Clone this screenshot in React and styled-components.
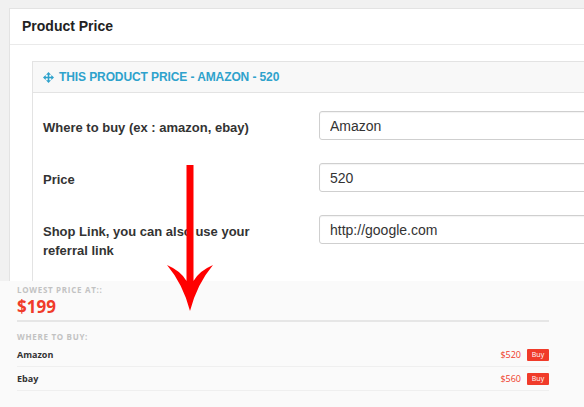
import React from "react";
import styled, { createGlobalStyle } from "styled-components";

const GlobalStyle = createGlobalStyle`
  html, body {
    margin: 0;
    padding: 0;
    background: #f1f1f1;
  }
  * {
    box-sizing: border-box;
  }
`;

const Page = styled.div`
  position: relative;
  width: 584px;
  height: 407px;
  overflow: hidden;
  background: #f1f1f1;
`;

const AdminArea = styled.div`
  height: 281px;
  overflow: hidden;
  padding: 8px 0 0 9px;
`;

const Panel = styled.div`
  margin-right: -60px;
  background: #fff;
  border: 1px solid #e3e3e3;
  font-family: "Liberation Sans", Arial, sans-serif;
  min-height: 320px;
`;

const PanelHeader = styled.div`
  height: 36px;
  display: flex;
  align-items: center;
  padding: 0 12px 2px;
  border-bottom: 1px solid #eaeaea;
  font-size: 14px;
  font-weight: bold;
  color: #222;
`;

const PanelBody = styled.div`
  padding: 16px 0 0 22px;
`;

const Box = styled.div`
  border: 1px solid #e3e3e3;
  min-height: 260px;
`;

const BoxHeader = styled.div`
  height: 31px;
  display: flex;
  align-items: center;
  gap: 5px;
  padding: 0 10px;
  background: #f8f8f8;
  border-bottom: 1px solid #e3e3e3;
  color: #2ea2cc;
  font-size: 12px;
  font-weight: bold;
  letter-spacing: -0.1px;
`;

const BoxBody = styled.div`
  padding: 18px 0 0 10px;
  display: flex;
  flex-direction: column;
  gap: 23px;
`;

const Row = styled.div`
  display: flex;
  align-items: flex-start;
`;

const Label = styled.label`
  width: 276px;
  flex-shrink: 0;
  padding-top: 7px;
  padding-right: 40px;
  font-size: 13px;
  line-height: 19px;
  font-weight: bold;
  color: #333;
`;

const Input = styled.input`
  width: 320px;
  height: 29px;
  padding: 0 10px;
  border: 1px solid #cfcfcf;
  border-radius: 3px;
  box-shadow: inset 0 1px 1px rgba(0, 0, 0, 0.05);
  font-family: "Liberation Sans", Arial, sans-serif;
  font-size: 14px;
  color: #333;
  background: #fff;
`;

const Widget = styled.div`
  height: 126px;
  background: #fafafa;
  padding: 3px 35px 0 17px;
  font-family: "Open Sans", sans-serif;
`;

const Caption = styled.div`
  font-size: 8px;
  line-height: 12px;
  font-weight: bold;
  letter-spacing: 0.7px;
  text-transform: uppercase;
  color: #c2c2c2;
`;

const BigPrice = styled.div`
  font-size: 17px;
  line-height: 22px;
  font-weight: bold;
  color: #f03b2a;
  padding-bottom: 2px;
  margin-bottom: 9px;
  border-bottom: 2px solid #e6e6e6;
`;

const ShopList = styled.div``;

const ShopRow = styled.div`
  height: 24px;
  display: flex;
  align-items: center;
  border-bottom: 1px solid #efefef;
`;

const ShopName = styled.span`
  flex: 1;
  font-size: 9px;
  font-weight: bold;
  color: #333;
`;

const ShopPrice = styled.span`
  font-size: 9px;
  color: #f03b2a;
  margin-right: 6px;
`;

const BuyButton = styled.span`
  width: 22px;
  height: 12px;
  display: flex;
  align-items: center;
  justify-content: center;
  background: #f03b2a;
  border-radius: 1px;
  color: #fff;
  font-size: 7px;
`;

const ArrowOverlay = styled.svg`
  position: absolute;
  inset: 0;
  pointer-events: none;
`;

const MoveIcon = () => (
  <svg width="11" height="11" viewBox="0 0 20 20" fill="#2ea2cc">
    <rect x="8.6" y="3" width="2.8" height="14" />
    <rect x="3" y="8.6" width="14" height="2.8" />
    <polygon points="10,0 14.5,5 5.5,5" />
    <polygon points="10,20 14.5,15 5.5,15" />
    <polygon points="0,10 5,5.5 5,14.5" />
    <polygon points="20,10 15,5.5 15,14.5" />
  </svg>
);

const fields = [
  { label: "Where to buy (ex : amazon, ebay)", value: "Amazon" },
  { label: "Price", value: "520" },
  { label: "Shop Link, you can also use your referral link", value: "http://google.com" },
];

const shops = [
  { name: "Amazon", price: "$520" },
  { name: "Ebay", price: "$560" },
];

export default function App() {
  return (
    <Page>
      <GlobalStyle />
      <AdminArea>
        <Panel>
          <PanelHeader>Product Price</PanelHeader>
          <PanelBody>
            <Box>
              <BoxHeader>
                <MoveIcon />
                THIS PRODUCT PRICE - AMAZON - 520
              </BoxHeader>
              <BoxBody>
                {fields.map((f) => (
                  <Row key={f.label}>
                    <Label>{f.label}</Label>
                    <Input defaultValue={f.value} />
                  </Row>
                ))}
              </BoxBody>
            </Box>
          </PanelBody>
        </Panel>
      </AdminArea>
      <Widget>
        <Caption>Lowest price at::</Caption>
        <BigPrice>$199</BigPrice>
        <Caption>Where to buy:</Caption>
        <ShopList>
          {shops.map((s) => (
            <ShopRow key={s.name}>
              <ShopName>{s.name}</ShopName>
              <ShopPrice>{s.price}</ShopPrice>
              <BuyButton>Buy</BuyButton>
            </ShopRow>
          ))}
        </ShopList>
      </Widget>
      <ArrowOverlay viewBox="0 0 584 407" width="584" height="407">
        <path
          d="M186.5 165 H193.5 V281 Q199 271 213 265 Q197 284 190 311 Q183 284 167 265 Q181 271 186.5 281 Z"
          fill="#ff0000"
        />
      </ArrowOverlay>
    </Page>
  );
}
